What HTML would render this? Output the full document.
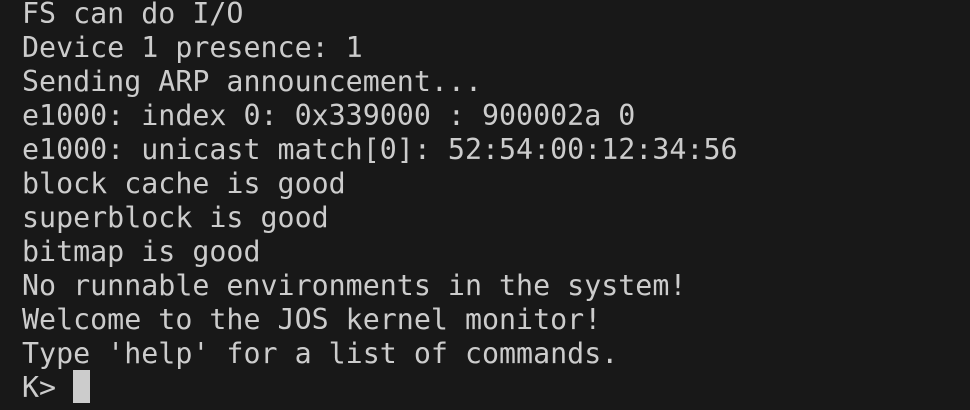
<!DOCTYPE html>
<html><head><style>
html,body{margin:0;padding:0;background:#181818;width:970px;height:410px;overflow:hidden}
pre{position:absolute;left:22px;top:-3px;margin:0;font-family:"DejaVu Sans Mono","Liberation Mono",monospace;font-size:28.3px;line-height:34px;color:#cccccc}
.c{display:inline-block;width:17px;height:33px;background:#cccccc;vertical-align:top;margin-top:-1px}
</style></head><body>
<pre>FS can do I/O
Device 1 presence: 1
Sending ARP announcement...
e1000: index 0: 0x339000 : 900002a 0
e1000: unicast match[0]: 52:54:00:12:34:56
block cache is good
superblock is good
bitmap is good
No runnable environments in the system!
Welcome to the JOS kernel monitor!
Type 'help' for a list of commands.
K&gt; <span class="c"></span></pre>
</body></html>
